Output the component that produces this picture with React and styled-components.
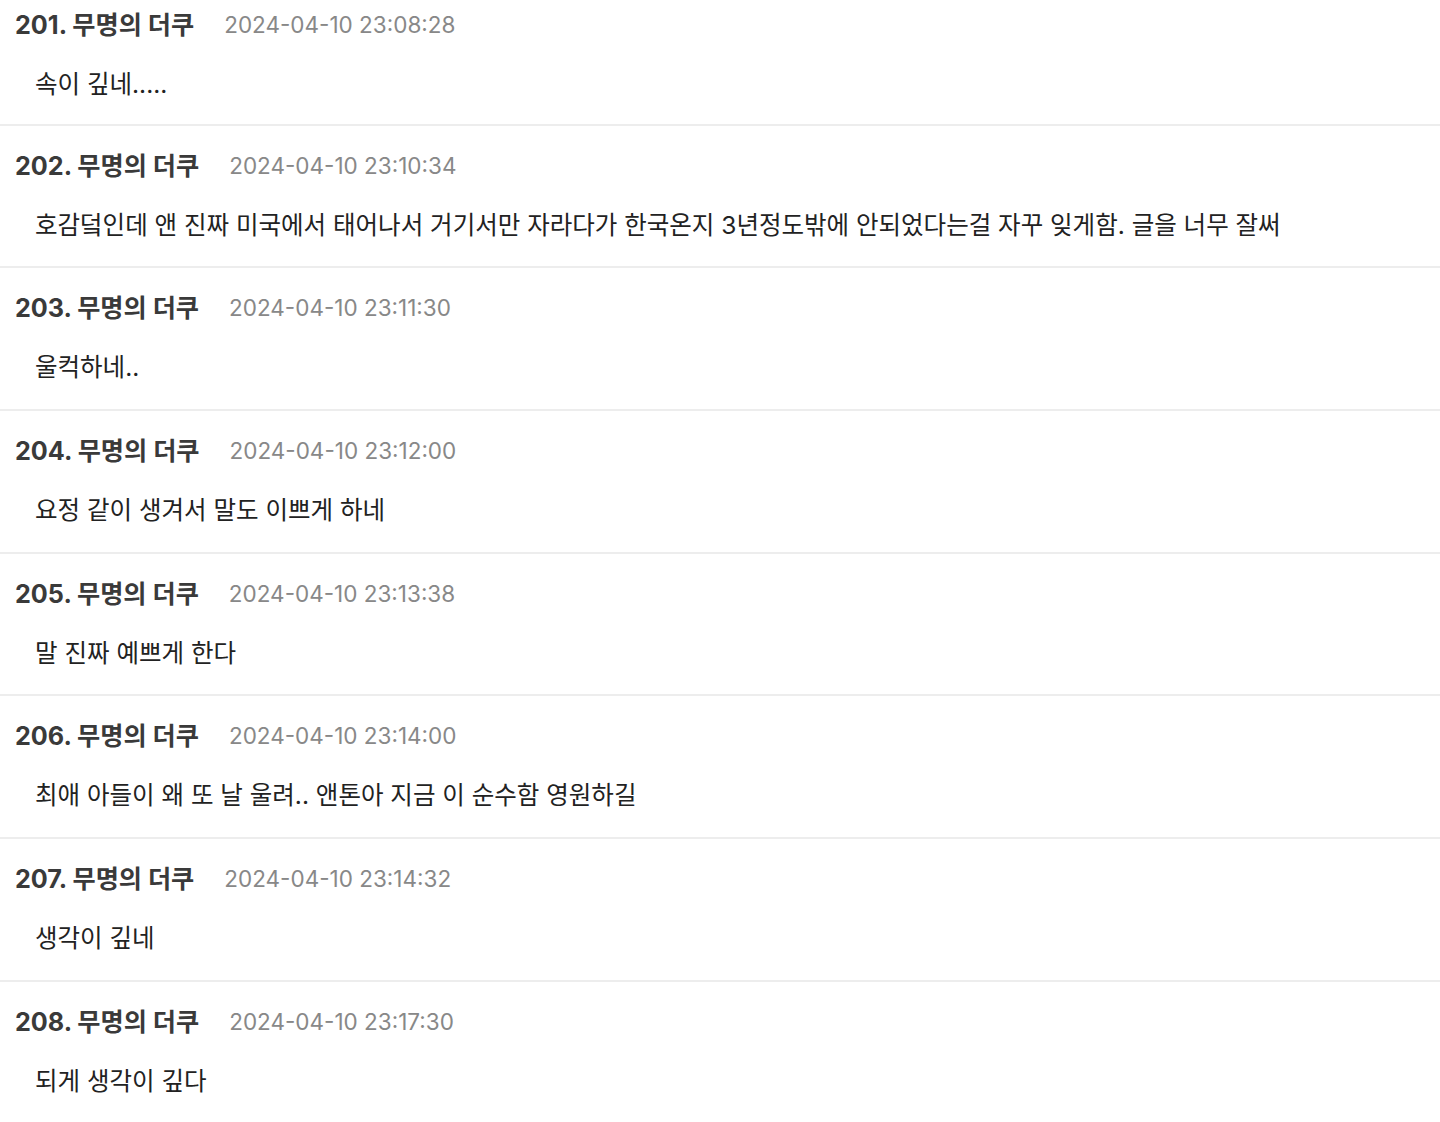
import React from "react";
import styled, { createGlobalStyle } from "styled-components";

const GlobalStyle = createGlobalStyle`
  html, body {
    margin: 0;
    padding: 0;
    background: #fff;
  }
  body {
    font-family: Inter, "Noto Sans CJK KR", sans-serif;
    -webkit-font-smoothing: antialiased;
  }
`;

const List = styled.ul`
  list-style: none;
  margin: 0;
  padding: 0;
`;

const Item = styled.li`
  padding: 23px 15px 24.67px;
  border-bottom: 2px solid #ededed;

  &:first-child {
    padding-top: 8px;
    padding-bottom: 22.67px;
  }
`;

const Header = styled.div`
  display: flex;
  align-items: center;
  gap: 30px;
  height: 34px;
`;

const Nick = styled.span`
  font-size: 25.2px;
  font-weight: 700;
  color: #3a3a3a;
  line-height: 34px;
`;

const Date = styled.span`
  font-size: 22.5px;
  color: #888;
  line-height: 34px;
`;

const Body = styled.p`
  margin: 25px 0 0;
  padding-left: 20px;
  font-size: 24.5px;
  line-height: 34px;
  color: #222;
`;

const comments = [
  { no: 201, date: "2024-04-10 23:08:28", text: "속이 깊네....." },
  {
    no: 202,
    date: "2024-04-10 23:10:34",
    text: "호감덬인데 앤 진짜 미국에서 태어나서 거기서만 자라다가 한국온지 3년정도밖에 안되었다는걸 자꾸 잊게함. 글을 너무 잘써",
  },
  { no: 203, date: "2024-04-10 23:11:30", text: "울컥하네.." },
  { no: 204, date: "2024-04-10 23:12:00", text: "요정 같이 생겨서 말도 이쁘게 하네" },
  { no: 205, date: "2024-04-10 23:13:38", text: "말 진짜 예쁘게 한다" },
  {
    no: 206,
    date: "2024-04-10 23:14:00",
    text: "최애 아들이 왜 또 날 울려.. 앤톤아 지금 이 순수함 영원하길",
  },
  { no: 207, date: "2024-04-10 23:14:32", text: "생각이 깊네" },
  { no: 208, date: "2024-04-10 23:17:30", text: "되게 생각이 깊다" },
];

const App = () => {
  return (
    <>
      <GlobalStyle />
      <List>
        {comments.map((c) => (
          <Item key={c.no}>
            <Header>
              <Nick>{c.no}. 무명의 더쿠</Nick>
              <Date>{c.date}</Date>
            </Header>
            <Body>{c.text}</Body>
          </Item>
        ))}
      </List>
    </>
  );
};

export default App;
